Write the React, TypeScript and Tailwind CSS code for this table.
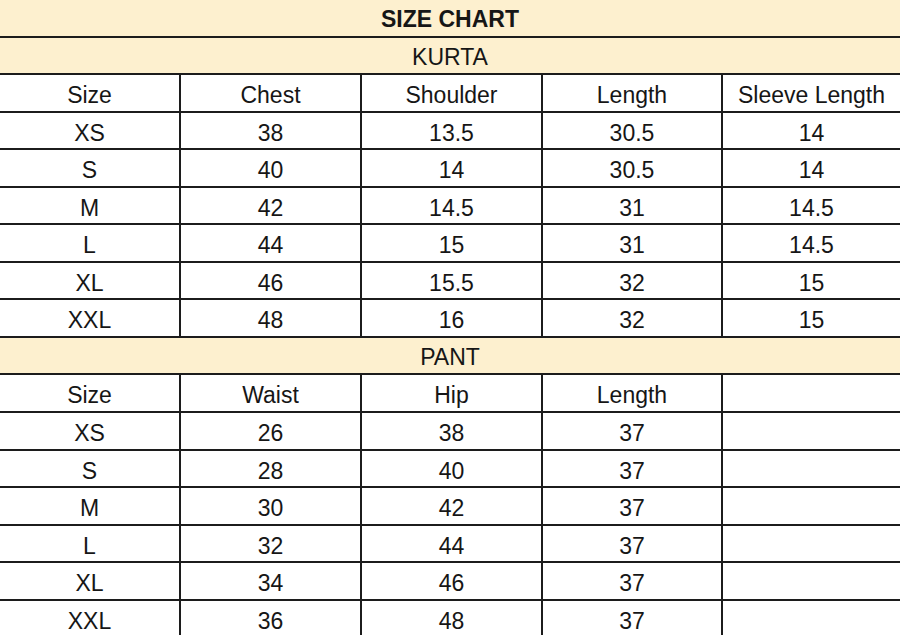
const kurta = [
  ['XS', '38', '13.5', '30.5', '14'],
  ['S', '40', '14', '30.5', '14'],
  ['M', '42', '14.5', '31', '14.5'],
  ['L', '44', '15', '31', '14.5'],
  ['XL', '46', '15.5', '32', '15'],
  ['XXL', '48', '16', '32', '15'],
];

const pant = [
  ['XS', '26', '38', '37', ''],
  ['S', '28', '40', '37', ''],
  ['M', '30', '42', '37', ''],
  ['L', '32', '44', '37', ''],
  ['XL', '34', '46', '37', ''],
  ['XXL', '36', '48', '37', ''],
];

function Banner({ text, bold }: { text: string; bold?: boolean }) {
  return (
    <div
      className={`flex h-[37.55px] shrink-0 items-center justify-center border-b-2 border-[#1c1c1c] bg-[#fdf0cf] pt-[3px] text-[23px] ${
        bold ? 'font-bold' : ''
      }`}
    >
      {text}
    </div>
  );
}

function Row({ cells }: { cells: string[] }) {
  return (
    <div className="grid h-[37.55px] shrink-0 grid-cols-[181px_181px_181px_180px_1fr] border-b-2 border-[#1c1c1c] bg-white">
      {cells.map((c, i) => (
        <div
          key={i}
          className={`flex items-center justify-center pt-[3px] text-[23px] ${
            i < 4 ? 'border-r-2 border-[#1c1c1c]' : ''
          }`}
        >
          {c}
        </div>
      ))}
    </div>
  );
}

export default function App() {
  return (
    <div
      className="flex h-[635px] w-[900px] flex-col overflow-hidden bg-white text-[#161616]"
      style={{ fontFamily: '"Liberation Sans", Arial, sans-serif' }}
    >
      <Banner text="SIZE CHART" bold />
      <Banner text="KURTA" />
      <Row cells={['Size', 'Chest', 'Shoulder', 'Length', 'Sleeve Length']} />
      {kurta.map((r) => (
        <Row key={'k' + r[0]} cells={r} />
      ))}
      <Banner text="PANT" />
      <Row cells={['Size', 'Waist', 'Hip', 'Length', '']} />
      {pant.map((r) => (
        <Row key={'p' + r[0]} cells={r} />
      ))}
    </div>
  );
}
